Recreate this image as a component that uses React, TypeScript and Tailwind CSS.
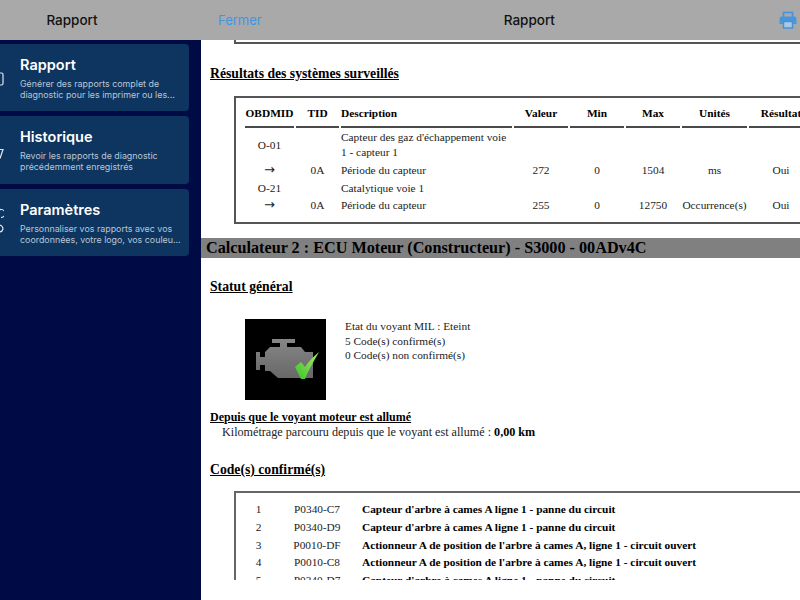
import React from "react";

const serif = { fontFamily: '"Liberation Serif", serif' };

function SideCard({ icon, title, lines, h }: { icon: React.ReactNode; title: string; lines: string[]; h: string }) {
  return (
    <div className={`flex ${h} -ml-[20px] w-[209px] rounded-[4px] bg-[#0d355f]`}>
      <div className="flex w-[40px] shrink-0 items-center justify-center">{icon}</div>
      <div className="flex min-w-0 flex-col pt-[12px]">
        <div className="text-[14.5px] leading-[18px] font-semibold text-white">{title}</div>
        <div className="mt-[4px] text-[8.9px] leading-[11px] text-[#b9c6d6]">
          {lines.map((l) => (
            <div key={l} className="whitespace-nowrap">{l}</div>
          ))}
        </div>
      </div>
    </div>
  );
}

function EngineImage() {
  return (
    <svg width="81" height="81" viewBox="0 0 81 81" className="block shrink-0">
      <rect width="81" height="81" fill="#000" />
      <defs>
        <linearGradient id="eng" x1="0" y1="0" x2="0" y2="1">
          <stop offset="0" stopColor="#868686" />
          <stop offset="1" stopColor="#686868" />
        </linearGradient>
        <linearGradient id="chk" x1="1" y1="0" x2="0" y2="1">
          <stop offset="0" stopColor="#a4ee66" />
          <stop offset="1" stopColor="#3cc02c" />
        </linearGradient>
      </defs>
      <path
        fill="url(#eng)"
        d="M27 20H50V24H42V28H56L60 33H68V59H33L25 52H20V46H15V51H11V33H15V38H20V33L25 28H35V24H27Z"
      />
      <path fill="url(#chk)" d="M50 48L56 43L60 48C63 43 68 38 74 33C69 42 64 50 60 60L56 60Z" />
    </svg>
  );
}

const thBar = "border-b-2 border-[#4a4a4a] px-0 pb-[5px] pt-[8px] text-center align-middle font-bold leading-[15px]";

function Arrow() {
  return <span className="font-['DejaVu_Sans'] text-[13px]">→</span>;
}

function ResultsTable() {
  const td = "p-0 text-center align-middle leading-[14.5px]";
  const tl = "p-0 text-left align-middle leading-[14.5px]";
  return (
    <div className="-mr-[40px] ml-[33px] mt-[14px] h-[128px] border-y-2 border-l-2 border-[#555] pl-[7px]">
      <table className="w-[572px] table-fixed border-separate border-spacing-x-[2px] border-spacing-y-0 text-[11.35px] text-[#222]">
        <colgroup>
          <col className="w-[49px]" />
          <col className="w-[43px]" />
          <col className="w-[171px]" />
          <col className="w-[54px]" />
          <col className="w-[54px]" />
          <col className="w-[54px]" />
          <col className="w-[65px]" />
          <col className="w-[64px]" />
        </colgroup>
        <thead>
          <tr className="text-black">
            {["OBDMID", "TID"].map((h) => (
              <th key={h} className={`${thBar} whitespace-nowrap`}>{h}</th>
            ))}
            <th className={`${thBar} text-left`}>Description</th>
            {["Valeur", "Min", "Max", "Unités", "Résultat"].map((h) => (
              <th key={h} className={`${thBar} whitespace-nowrap`}>{h}</th>
            ))}
          </tr>
        </thead>
        <tbody>
          <tr>
            <td className={`${td} pt-[1px]`}>O-01</td>
            <td />
            <td className={`${tl} pt-[2px] pb-[2px]`}>Capteur des gaz d'échappement voie 1 - capteur 1</td>
          </tr>
          <tr className="h-[18px]">
            <td className={td}><Arrow /></td>
            <td className={td}>0A</td>
            <td className={tl}>Période du capteur</td>
            <td className={td}>272</td>
            <td className={td}>0</td>
            <td className={td}>1504</td>
            <td className={td}>ms</td>
            <td className={td}>Oui</td>
          </tr>
          <tr className="h-[17.5px]">
            <td className={td}>O-21</td>
            <td />
            <td className={tl}>Catalytique voie 1</td>
          </tr>
          <tr className="h-[18px]">
            <td className={td}><Arrow /></td>
            <td className={td}>0A</td>
            <td className={tl}>Période du capteur</td>
            <td className={td}>255</td>
            <td className={td}>0</td>
            <td className={td}>12750</td>
            <td className={td}>Occurrence(s)</td>
            <td className={td}>Oui</td>
          </tr>
        </tbody>
      </table>
    </div>
  );
}

const codes = [
  ["1", "P0340-C7", "Capteur d'arbre à cames A ligne 1 - panne du circuit"],
  ["2", "P0340-D9", "Capteur d'arbre à cames A ligne 1 - panne du circuit"],
  ["3", "P0010-DF", "Actionneur A de position de l'arbre à cames A, ligne 1 - circuit ouvert"],
  ["4", "P0010-C8", "Actionneur A de position de l'arbre à cames A, ligne 1 - circuit ouvert"],
  ["5", "P0340-D7", "Capteur d'arbre à cames A ligne 1 - panne du circuit"],
];

export default function App() {
  return (
    <div className="flex h-[600px] w-[800px] overflow-hidden bg-white" style={{ fontFamily: "Inter, sans-serif" }}>
      <aside className="flex w-[201px] shrink-0 flex-col overflow-hidden bg-[#000a45]">
        <header className="flex h-[40px] shrink-0 items-center justify-center bg-[#a9a9a9] pr-[57px] text-[13.5px] font-medium text-[#111]">
          Rapport
        </header>
        <div className="flex flex-col gap-[5px] pt-[4px]">
          <SideCard
            h="h-[67px]"
            title="Rapport"
            lines={["Générer des rapports complet de", "diagnostic pour les imprimer ou les..."]}
            icon={
              <svg width="12" height="14" viewBox="0 0 12 14" className="-ml-[5px] mt-[2px]">
                <rect x="1" y="1" width="10" height="12" rx="1.5" fill="none" stroke="#dfe6ee" strokeWidth="1.2" />
              </svg>
            }
          />
          <SideCard
            h="h-[68px]"
            title="Historique"
            lines={["Revoir les rapports de diagnostic", "précédemment enregistrés"]}
            icon={
              <svg width="12" height="14" viewBox="0 0 12 14" className="-ml-[5px] mt-[8px]">
                <path d="M6 2.500h5l-3 9" fill="none" stroke="#dfe6ee" strokeWidth="1.2" />
              </svg>
            }
          />
          <SideCard
            h="h-[67px]"
            title="Paramètres"
            lines={["Personnaliser vos rapports avec vos", "coordonnées, votre logo, vos couleu..."]}
            icon={
              <svg width="12" height="28" viewBox="0 0 12 28" className="-ml-[5px] -mt-[8px]">
                <path d="M5 1l3 3M5 8.500a4 4 0 1 1 4 4" fill="none" stroke="#dfe6ee" strokeWidth="1.2" />
                <path d="M7 20a4 4 0 0 1 4 4 4 4 0 0 1-4 3" fill="none" stroke="#dfe6ee" strokeWidth="1.2" />
              </svg>
            }
          />
        </div>
      </aside>

      <main className="flex min-w-0 flex-1 flex-col">
        <header className="flex h-[40px] shrink-0 items-center justify-between bg-[#a9a9a9] pl-[17px] pr-[3px]">
          <span className="mt-[2px] text-[13px] text-[#3f96e4]">Fermer</span>
          <span className="ml-[18px] text-[13.5px] font-medium text-[#111]">Rapport</span>
          <svg width="18" height="18" viewBox="0 0 18 18">
            <path d="M4.500 6V1.500h9V6" fill="none" stroke="#4592db" strokeWidth="1.600" />
            <path d="M2.500 5.500h13A2 2 0 0 1 17.500 7.500V13h-17V7.500a2 2 0 0 1 2-2z" fill="#4a96dc" />
            <rect x="4.500" y="10.500" width="9" height="6.500" fill="#a9c8e4" stroke="#4592db" strokeWidth="1.500" />
          </svg>
        </header>

        <div className="h-[540px] overflow-hidden text-black" style={serif}>
          <div className="ml-[33px] h-[4px] border-b-2 border-l-2 border-[#555]" />

          <h2 className="ml-[9px] mt-[22px] text-[13.7px] leading-[16px] font-bold underline">Résultats des systèmes surveillés</h2>

          <ResultsTable />

          <div className="mt-[14px] h-[20px] bg-[#808080] pl-[5px] text-[16.2px] leading-[20px] font-bold whitespace-nowrap text-black">
            Calculateur 2 : ECU Moteur (Constructeur) - S3000 - 00ADv4C
          </div>

          <h2 className="ml-[9px] mt-[21px] text-[13.7px] leading-[16px] font-bold underline">Statut général</h2>

          <div className="ml-[44px] mt-[24px] flex gap-[19px]">
            <EngineImage />
            <div className="text-[11.35px] leading-[14.5px] text-[#222]">
              <div>Etat du voyant MIL : Eteint</div>
              <div>5 Code(s) confirmé(s)</div>
              <div>0 Code(s) non confirmé(s)</div>
            </div>
          </div>

          <div className="ml-[9px] mt-[10px] text-[12px] leading-[15px] font-bold underline">Depuis que le voyant moteur est allumé</div>
          <div className="ml-[21px] text-[12.15px] leading-[15px] text-[#222]">
            Kilométrage parcouru depuis que le voyant est allumé : <b className="text-black">0,00 km</b>
          </div>

          <h2 className="ml-[9px] mt-[22px] text-[13.7px] leading-[16px] font-bold underline">Code(s) confirmé(s)</h2>

          <div className="ml-[33px] mt-[13px] border-l-2 border-t-2 border-[#666] pt-[8px]">
            {codes.map(([n, c, d]) => (
              <div key={n} className="flex h-[17.75px] items-center text-[11.35px] leading-[17.75px]">
                <div className="w-[45px] text-center text-[#222]">{n}</div>
                <div className="ml-[3px] w-[66px] text-center text-[#222]">{c}</div>
                <div className="ml-[12px] font-bold whitespace-nowrap">{d}</div>
              </div>
            ))}
          </div>
        </div>
      </main>
    </div>
  );
}
